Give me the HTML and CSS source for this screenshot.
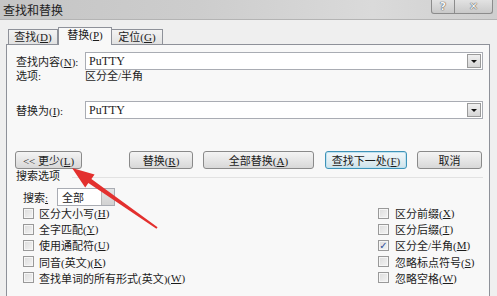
FILE: index.html
```html
<!DOCTYPE html>
<html lang="zh-CN">
<head>
  <meta charset="UTF-8" />
  <title>查找和替换</title>
  <link rel="stylesheet" href="styles.css">
</head>
<body>
  <div class="window">
    <div class="titlebar">
      <span class="title">查找和替换</span>
      <div class="caption-btns">
        <span class="cap help">?</span>
        <span class="cap close">✕</span>
      </div>
    </div>

    <div class="dialog">
      <div class="tabs">
        <div class="tab">查找(<u>D</u>)</div>
        <div class="tab active">替换(<u>P</u>)</div>
        <div class="tab">定位(<u>G</u>)</div>
      </div>

      <div class="panel">
        <div class="field">
          <span class="lbl">查找内容(<u>N</u>):</span>
          <div class="combo"><span class="val">PuTTY</span><i class="drop"></i></div>
        </div>
        <div class="field opts">
          <span class="lbl">选项:</span>
          <span>区分全/半角</span>
        </div>
        <div class="field replace">
          <span class="lbl">替换为(<u>I</u>):</span>
          <div class="combo"><span class="val">PuTTY</span><i class="drop"></i></div>
        </div>

        <div class="buttons">
          <button class="btn less">&lt;&lt; 更少(<u>L</u>)</button>
          <button class="btn repl">替换(<u>R</u>)</button>
          <button class="btn all">全部替换(<u>A</u>)</button>
          <button class="btn next">查找下一处(<u>F</u>)</button>
          <button class="btn cancel">取消</button>
        </div>

        <div class="group-title"><span>搜索选项</span><span class="rule"></span></div>

        <div class="search-row">
          <span>搜索<u>:</u></span>
          <div class="select"><span>全部</span><i class="sel-drop"></i></div>
        </div>

        <div class="checks">
          <ul class="col">
            <li><i class="box"></i>区分大小写(<u>H</u>)</li>
            <li><i class="box"></i>全字匹配(<u>Y</u>)</li>
            <li><i class="box"></i>使用通配符(<u>U</u>)</li>
            <li><i class="box"></i>同音(英文)(<u>K</u>)</li>
            <li><i class="box"></i>查找单词的所有形式(英文)(<u>W</u>)</li>
          </ul>
          <ul class="col right">
            <li><i class="box"></i>区分前缀(<u>X</u>)</li>
            <li><i class="box"></i>区分后缀(<u>T</u>)</li>
            <li><i class="box checked">✓</i>区分全/半角(<u>M</u>)</li>
            <li><i class="box"></i>忽略标点符号(<u>S</u>)</li>
            <li><i class="box"></i>忽略空格(<u>W</u>)</li>
          </ul>
        </div>
      </div>
    </div>

    <svg class="arrow" width="497" height="296" viewBox="0 0 497 296">
      <polygon points="72,168 94.6,174.4 91.4,178.9 157.6,227.2 156.4,228.8 88.4,182.9 85.2,187.4" fill="#e3302e"/>
    </svg>
  </div>
</body>
</html>
```

FILE: styles.css
```css
* {
  margin: 0;
  padding: 0;
  box-sizing: border-box;
}

body {
  margin: 0;
  width: 497px;
  height: 296px;
  overflow: hidden;
  background: #efefef;
  font-family: "Liberation Serif", "Noto Sans CJK SC", serif;
  font-size: 11px;
  color: #1c1c1c;
}

u {
  text-decoration: underline;
  text-underline-offset: 1px;
}

.window {
  position: relative;
  width: 497px;
  height: 296px;
}

/* title bar */
.titlebar {
  height: 20px;
  display: flex;
  justify-content: space-between;
  align-items: flex-start;
  padding: 0 4px 0 3px;
  background: linear-gradient(to right, #c5c5c5, #cdcdcd 40%, #dadada 75%, #cfcfcf);
  border-bottom: 1px solid #b4b4b4;
}

.title {
  font-family: "Noto Sans CJK SC", sans-serif;
  font-size: 12px;
  line-height: 20px;
  color: #222;
}

.caption-btns {
  display: flex;
}

.cap {
  height: 14px;
  display: flex;
  align-items: center;
  justify-content: center;
  border: 1px solid #8c8c8c;
  border-top: none;
  background: linear-gradient(#e2e2e2, #c9c9c9);
  color: #f6f6f6;
  font-family: "DejaVu Sans", sans-serif;
  font-weight: bold;
  font-size: 11px;
  text-shadow: 0 0 1px #444, 0 0 1px #444;
}

.help {
  width: 24px;
  border-radius: 0 0 0 3px;
}

.close {
  width: 38px;
  border-left: none;
  border-radius: 0 0 3px 0;
}

/* tabs + panel */
.dialog {
  padding: 0 7px 0 6px;
}

.tabs {
  height: 24px;
  display: flex;
  align-items: flex-end;
  padding-left: 2px;
}

.tab {
  height: 15px;
  line-height: 14px;
  text-align: center;
  border: 1px solid #8e9199;
  border-bottom: none;
  background: linear-gradient(#f3f3f3, #e2e2e2);
}

.tab:nth-child(1) {
  width: 50px;
}

.tab.active {
  width: 54px;
  height: 18px;
  line-height: 15px;
  margin-bottom: -1px;
  background: #f8f8f8;
  position: relative;
  z-index: 1;
}

.tab:nth-child(3) {
  width: 51px;
  border-left: none;
}

.panel {
  height: 260px;
  border: 1px solid #8e9199;
  border-bottom: none;
  background: #f8f8f8;
  padding: 7px 6px 0 9px;
}

.field {
  display: flex;
  align-items: center;
  height: 18px;
}

.lbl {
  width: 69px;
  flex-shrink: 0;
}

.opts {
  height: 12px;
  margin-top: -1px;
}

.replace {
  margin-top: 20px;
}

.combo {
  flex: 1;
  height: 18px;
  display: flex;
  align-items: center;
  justify-content: space-between;
  background: #fff;
  border: 1px solid #a9acb3;
  padding: 0 1px 0 3px;
}

.val {
  font-size: 12px;
}

.drop {
  width: 14px;
  height: 14px;
  border: 1px solid #9a9a9a;
  background: linear-gradient(#f0f0f0, #d6d6d6);
  position: relative;
}

.drop::after {
  content: "";
  position: absolute;
  left: 3px;
  top: 5px;
  border-left: 3px solid transparent;
  border-right: 3px solid transparent;
  border-top: 3px solid #111;
}

/* buttons */
.buttons {
  display: flex;
  margin-top: 32px;
  margin-left: -1px;
  height: 18px;
}

.btn {
  height: 18px;
  font-family: inherit;
  font-size: 11px;
  color: #1c1c1c;
  border: 1px solid #8a8a8a;
  border-radius: 3px;
  background: linear-gradient(#f4f4f4, #e6e6e6 50%, #d8d8d8);
}

.less { width: 67px; }
.repl { width: 64px; margin-left: 47px; }
.all { width: 111px; margin-left: 10px; }
.next {
  width: 82px;
  margin-left: 11px;
  border-color: #3f93b8;
  background: linear-gradient(#f1f8fb, #e2eef3 50%, #cfe2ea);
  box-shadow: inset 0 0 0 1px #bfe2f0;
}
.cancel { width: 65px; margin-left: 10px; }

/* search options */
.group-title {
  display: flex;
  align-items: center;
  height: 14px;
  line-height: 14px;
}

.rule {
  flex: 1;
  height: 1px;
  margin-left: 12px;
  margin-top: 2px;
  background: #e2e2e2;
}

.search-row {
  display: flex;
  align-items: center;
  margin-top: 5px;
  padding-left: 7px;
  height: 18px;
}

.search-row > span {
  width: 34px;
}

.select {
  width: 58px;
  height: 18px;
  display: flex;
  align-items: center;
  justify-content: space-between;
  background: #fff;
  border: 1px solid #a9acb3;
  padding-left: 4px;
}

.sel-drop {
  width: 13px;
  height: 16px;
  background: linear-gradient(#e4e4e4, #d2d2d2);
  border-left: 1px solid #b8b8b8;
}

.checks {
  display: flex;
  margin-top: -1px;
  padding-left: 7px;
}

.col {
  list-style: none;
  flex: 1;
}

.col.right {
  flex: 0 0 105px;
}

.checks li {
  display: flex;
  align-items: center;
  height: 16.2px;
}

.box {
  width: 11px;
  height: 11px;
  margin-right: 5px;
  border: 1px solid #999;
  background: linear-gradient(135deg, #dcdcdc, #f4f4f4);
  box-shadow: inset 0 0 0 1px #f6f6f6;
  font-style: normal;
  font-family: "DejaVu Sans", sans-serif;
  font-size: 10px;
  line-height: 9px;
  text-align: center;
  color: #2b4f9c;
  font-weight: bold;
}

.right .box {
  margin-right: 6px;
}

.arrow {
  position: absolute;
  top: 0;
  left: 0;
  pointer-events: none;
}
```
